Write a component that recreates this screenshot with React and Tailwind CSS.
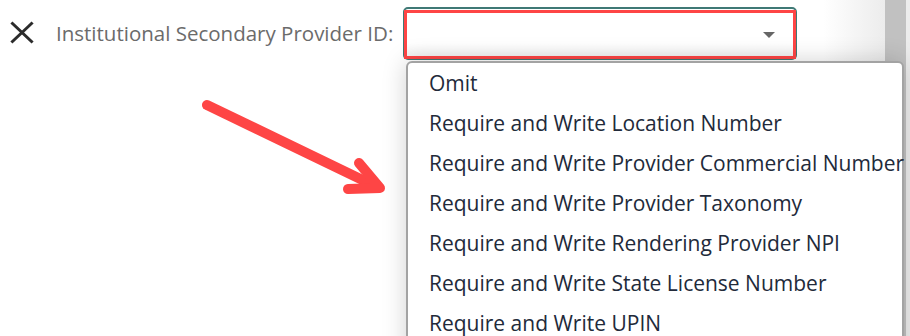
const options = [
  'Omit',
  'Require and Write Location Number',
  'Require and Write Provider Commercial Number',
  'Require and Write Provider Taxonomy',
  'Require and Write Rendering Provider NPI',
  'Require and Write State License Number',
  'Require and Write UPIN',
]

function CloseIcon() {
  return (
    <svg width="26" height="24" viewBox="0 0 26 24" className="text-[#2b2b2b]">
      <g stroke="currentColor" strokeWidth="3" strokeLinecap="square">
        <line x1="3.5" y1="2.5" x2="22.5" y2="20.5" />
        <line x1="22.5" y1="2.5" x2="3.5" y2="20.5" />
      </g>
    </svg>
  )
}

export default function App() {
  return (
    <div className="relative w-[910px] h-[336px] overflow-hidden bg-white flex" style={{ fontFamily: '"Open Sans", sans-serif' }}>
      {/* main panel */}
      <div className="flex-1 relative bg-gradient-to-r from-white from-[93%] to-[#ececec]">
        <div className="flex items-center h-[67px] pl-[9px] pb-[1px]">
          <CloseIcon />
          <span className="ml-[21px] text-[20.5px] text-[#6b6b6b] leading-none pt-[1px]">Institutional Secondary Provider ID:</span>
          {/* select */}
          <div className="ml-[10px] relative w-[394px] h-[53px] rounded-[5px] border-[2px] border-[#3f7975] bg-gradient-to-b from-white from-[70%] to-[#f1f1f1]">
            <div className="absolute right-[20px] top-[23px] w-0 h-0 border-l-[6px] border-r-[6px] border-t-[6px] border-l-transparent border-r-transparent border-t-[#666]" />
            {/* annotation highlight */}
            <div className="absolute -left-[1px] top-[1px] -right-[1px] -bottom-[1px] border-[3px] border-[#fe4545]" />
          </div>
        </div>

        {/* annotation arrow */}
        <svg className="absolute left-[195px] top-[95px]" width="200" height="105" viewBox="0 0 200 105">
          <g stroke="#fe4545" strokeWidth="10" strokeLinecap="round" strokeLinejoin="round" fill="none">
            <line x1="12" y1="10" x2="182" y2="92" />
            <polyline points="164,68 185,93 153,94" />
          </g>
        </svg>
      </div>

      {/* scrollbar */}
      <div className="w-[21px] bg-[#c1c1c1]" />
      <div className="w-[4px] bg-[#ececec]" />

      {/* dropdown list */}
      <div className="absolute left-[406px] top-[61px] w-[498px] h-[300px] bg-white rounded-t-[6px] border-[2px] border-[#a3a3a3] shadow-[0_0_24px_rgba(0,0,0,0.18)]">
        <ul className="pt-[1px]">
          {options.map(o => (
            <li key={o} className="h-[40px] flex items-center pl-[21px] text-[21px] text-[#222a3a] whitespace-nowrap">{o}</li>
          ))}
        </ul>
      </div>
    </div>
  )
}
